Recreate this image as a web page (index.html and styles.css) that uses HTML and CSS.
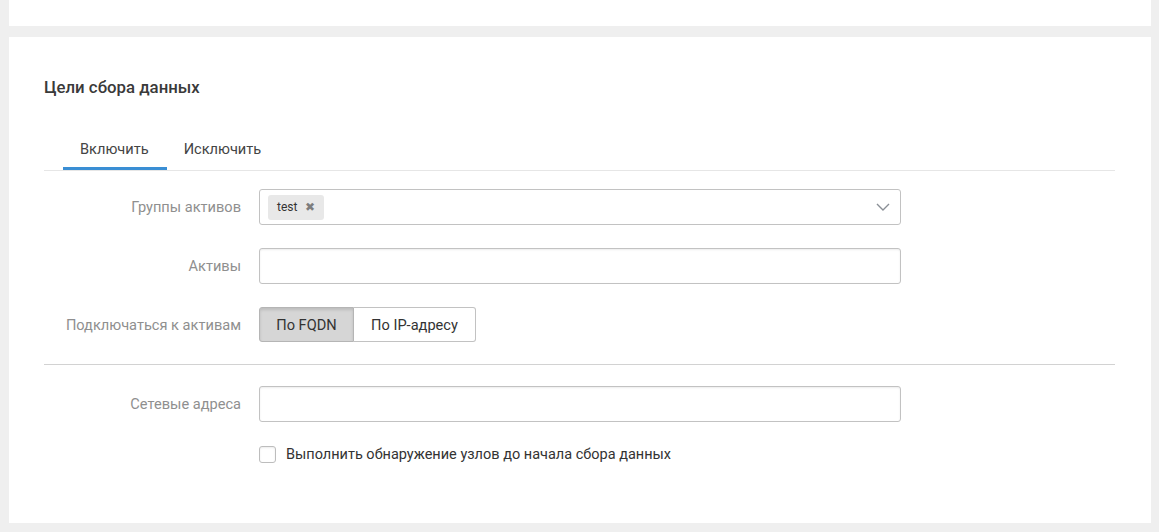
FILE: index.html
```html
<!DOCTYPE html>
<html lang="ru">

<head>
    <meta charset="UTF-8">
    <title>Цели сбора данных</title>
    <link rel="stylesheet" href="styles.css">
</head>

<body>
    <div class="page">
        <div class="card card--top"></div>

        <div class="card card--main">
            <h2 class="section-title">Цели сбора данных</h2>

            <ul class="tabs">
                <li class="tabs__item tabs__item--active">Включить</li>
                <li class="tabs__item">Исключить</li>
            </ul>

            <div class="form">
                <div class="form__row">
                    <label class="form__label">Группы активов</label>
                    <div class="field field--select">
                        <span class="chip">test <span class="chip__close">&#10006;</span></span>
                        <svg class="field__arrow" width="14" height="8" viewBox="0 0 14 8">
                            <path d="M1 1l6 6 6-6" fill="none" stroke="#8a8f96" stroke-width="1.4" />
                        </svg>
                    </div>
                </div>

                <div class="form__row">
                    <label class="form__label">Активы</label>
                    <div class="field"></div>
                </div>

                <div class="form__row">
                    <label class="form__label">Подключаться к активам</label>
                    <div class="btn-group">
                        <button class="btn-group__btn btn-group__btn--active">По FQDN</button>
                        <button class="btn-group__btn">По IP-адресу</button>
                    </div>
                </div>
            </div>

            <hr class="divider">

            <div class="form">
                <div class="form__row">
                    <label class="form__label">Сетевые адреса</label>
                    <div class="field"></div>
                </div>

                <div class="form__row form__row--check">
                    <span class="form__label"></span>
                    <label class="check">
                        <span class="check__box"></span>
                        Выполнить обнаружение узлов до начала сбора данных
                    </label>
                </div>
            </div>
        </div>
    </div>
</body>

</html>
```

FILE: styles.css
```css
body {
    margin: 0;
    background: #efefef;
    font-family: Roboto, "Liberation Sans", sans-serif;
    color: #333;
}

*,
::after,
::before {
    box-sizing: border-box;
}

ul {
    margin: 0;
    padding: 0;
    list-style: none;
}

.page {
    padding: 0 8px 9px 9px;
}

.card {
    background: #fff;
}

.card--top {
    height: 26px;
    margin-bottom: 11px;
}

.card--main {
    height: 486px;
    padding: 40px 36px 0 35px;
}

.section-title {
    margin: 0;
    font-size: 16.8px;
    font-weight: 500;
    line-height: 20px;
    color: #3a3a3a;
}

.tabs {
    display: flex;
    margin-top: 40px;
    padding-left: 19px;
    border-bottom: 1px solid #e6e6e6;
}

.tabs__item {
    padding: 0 17px;
    height: 33px;
    line-height: 24px;
    font-size: 14.6px;
    color: #444;
    border-bottom: 3px solid transparent;
}

.tabs__item--active {
    padding: 0 18px 0 17px;
    border-bottom-color: #3a8ed4;
}

.form {
    display: flex;
    flex-direction: column;
    gap: 23px;
}

.tabs + .form {
    margin-top: 18px;
}

.form__row {
    display: flex;
    align-items: center;
}

.form__label {
    width: 197px;
    margin-right: 18px;
    text-align: right;
    font-size: 14.6px;
    color: #8f8f8f;
}

.field {
    width: 642px;
    height: 36px;
    border: 1px solid #c2c2c2;
    border-radius: 3px;
    box-shadow: inset 0 1px 2px rgba(0, 0, 0, .08);
    background: #fff;
}

.field--select {
    display: flex;
    align-items: center;
    justify-content: space-between;
    padding: 0 10px 0 8px;
    box-shadow: none;
}

.chip {
    display: inline-flex;
    align-items: center;
    gap: 8px;
    height: 25px;
    padding: 0 9px 0 9px;
    border-radius: 3px;
    background: #e8e8e8;
    font-size: 12px;
    color: #333;
}

.chip__close {
    font-size: 12px;
    color: #7d7d7d;
}

.btn-group {
    display: flex;
}

.btn-group__btn {
    height: 35px;
    padding: 0;
    width: 95px;
    border: 1px solid #c2c2c2;
    background: #fff;
    font-family: inherit;
    font-size: 14.6px;
    color: #333;
}

.btn-group__btn:first-child {
    border-radius: 3px 0 0 3px;
}

.btn-group__btn:last-child {
    width: 122px;
    border-left: 0;
    border-radius: 0 3px 3px 0;
}

.btn-group__btn--active {
    background: #d6d6d6;
    border-color: #b5b5b5;
    box-shadow: inset 0 2px 3px rgba(0, 0, 0, .12);
}

.divider {
    margin: 22px 0 21px;
    border: 0;
    border-top: 1px solid #d2d2d2;
}

.form__row--check {
    margin-top: 1px;
}

.check {
    display: flex;
    align-items: center;
    gap: 10px;
    font-size: 14.5px;
    color: #333;
}

.check__box {
    width: 17px;
    height: 17px;
    border: 1px solid #bdbdbd;
    border-radius: 3px;
    box-shadow: inset 0 1px 2px rgba(0, 0, 0, .08);
}
```
